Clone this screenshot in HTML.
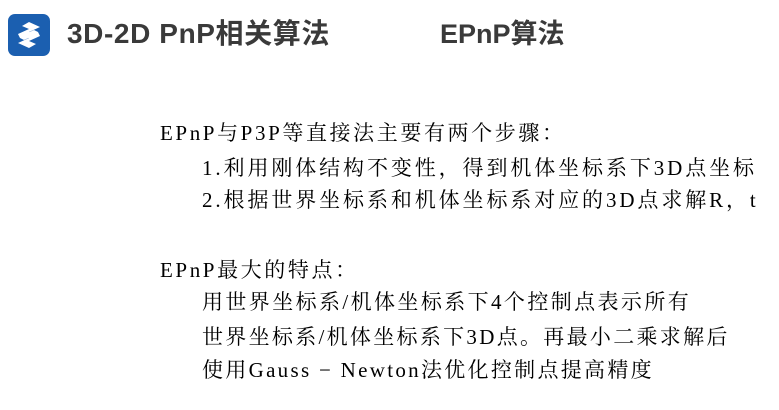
<!DOCTYPE html>
<html><head><meta charset="utf-8"><style>
body{margin:0;width:779px;height:410px;background:#fff;position:relative;overflow:hidden}
.t{position:absolute;font-family:"Liberation Sans","Noto Sans CJK SC",sans-serif;font-weight:bold;font-size:28px;color:#3a3a3a;top:16px;white-space:nowrap;line-height:36px;letter-spacing:0.6px}
.l{position:absolute;font-family:"Liberation Serif","Noto Serif CJK SC",serif;font-size:21px;color:#000;white-space:nowrap;line-height:24px;letter-spacing:2.6px}
</style></head><body>
<svg style="position:absolute;left:8px;top:14px" width="42" height="42" viewBox="0 0 42 42">
<rect width="42" height="42" rx="7" fill="#1b5fb0"/>
<path d="M21 8 L32 13 L21 18 L27 21 L16 26 L12 24 L10 20 L21 15 L14 12 Z" fill="#fff"/>
<path d="M21 34 L10 29 L21 24 L15 21 L26 16 L30 18 L32 22 L21 27 L28 30 Z" fill="#fff"/>
</svg>
<div class="t" style="left:67px">3D-2D PnP相关算法</div>
<div class="t" style="left:440px;letter-spacing:0;font-size:27px">EPnP算法</div>
<div class="l" style="left:160px;top:121px">EPnP与P3P等直接法主要有两个步骤：</div>
<div class="l" style="left:202px;top:156px;letter-spacing:2.9px">1.利用刚体结构不变性，得到机体坐标系下3D点坐标</div>
<div class="l" style="left:202px;top:188px;letter-spacing:2.9px">2.根据世界坐标系和机体坐标系对应的3D点求解R，t</div>
<div class="l" style="left:160px;top:258px">EPnP最大的特点：</div>
<div class="l" style="left:202px;top:290px;letter-spacing:2.4px">用世界坐标系/机体坐标系下4个控制点表示所有</div>
<div class="l" style="left:202px;top:325px;letter-spacing:2.3px">世界坐标系/机体坐标系下3D点。再最小二乘求解后</div>
<div class="l" style="left:202px;top:358px;letter-spacing:2.3px">使用Gauss − Newton法优化控制点提高精度</div>
</body></html>
